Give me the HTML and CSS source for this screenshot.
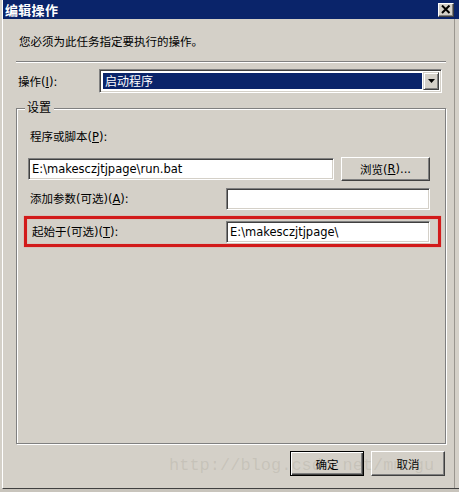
FILE: index.html
```html
<!DOCTYPE html>
<html lang="zh-CN">
<head>
<meta charset="utf-8">
<title>编辑操作</title>
<link rel="stylesheet" href="styles.css">
</head>
<body>
<div class="window">
  <div class="titlebar">
    <span class="title">编辑操作</span>
    <span class="close-btn">
      <svg width="10" height="9" viewBox="0 0 10 9"><path d="M1 0.5 L8.5 8 M8.5 0.5 L1 8" stroke="#000" stroke-width="2" fill="none"/></svg>
    </span>
  </div>
  <div class="content">
    <p class="intro">您必须为此任务指定要执行的操作。</p>
    <div class="sep"></div>
    <div class="op-row">
      <span class="op-label">操作(<u>I</u>):</span>
      <div class="combo">
        <div class="combo-value">启动程序</div>
        <div class="combo-btn">
          <svg width="7" height="4" viewBox="0 0 7 4"><path d="M0 0 H7 L3.5 4 Z" fill="#000"/></svg>
        </div>
      </div>
    </div>
    <div class="group">
      <div class="group-title">设置</div>
      <div class="field-label">程序或脚本(<u>P</u>):</div>
      <div class="row row-program">
        <div class="input input-program">E:\makesczjtjpage\run.bat</div>
        <div class="btn btn-browse">浏览(<u>R</u>)...</div>
      </div>
      <div class="row row-args">
        <span class="row-label">添加参数(可选)(<u>A</u>):</span>
        <div class="input input-short"></div>
      </div>
      <div class="highlight">
        <span class="row-label hl-label">起始于(可选)(<u>T</u>):</span>
        <div class="input input-short">E:\makesczjtjpage\</div>
      </div>
    </div>
    <div class="buttons">
      <div class="btn btn-default"><span>确定</span></div>
      <div class="btn btn-action">取消</div>
    </div>
  </div>
  <div class="watermark">http://blog.csdn.net/mmogu</div>
</div>
<div class="below"></div>
</body>
</html>
```
FILE: styles.css
```css
* { box-sizing: border-box; }
html, body {
  margin: 0;
  padding: 0;
  width: 459px;
  height: 492px;
  overflow: hidden;
  background: #d4d0c8;
  font-family: "DejaVu Sans", "Noto Sans CJK SC", sans-serif;
  font-size: 11.5px;
  color: #000;
}
u { text-decoration: underline; text-underline-offset: 1px; }

.window {
  position: relative;
  height: 489px;
  margin-left: 2px;
  border-left: 1px solid #ffffff;
  border-bottom: 1px solid #404040;
  box-shadow: inset -4px 0 0 #d4d0c8, inset -5px 0 0 #9a968f;
}

.titlebar {
  height: 19px;
  margin-top: 0;
  background: #0a246a;
  display: flex;
  align-items: center;
  justify-content: space-between;
  padding: 0 5px 0 2px;
}
.title {
  color: #fff;
  font-family: "Noto Sans CJK SC", sans-serif;
  font-weight: bold;
  font-size: 13px;
  line-height: 15px;
  letter-spacing: 0.3px;
}
.close-btn {
  width: 16px;
  height: 14px;
  background: #d4d0c8;
  border-top: 1px solid #fff;
  border-left: 1px solid #fff;
  border-right: 1px solid #404040;
  border-bottom: 1px solid #404040;
  box-shadow: inset -1px -1px 0 #808080;
  display: flex;
  align-items: center;
  justify-content: center;
  padding-bottom: 1px;
}

.content {
  padding: 0 13px 0 13px;
}
.intro {
  margin: 16px 0 0 0;
  padding-left: 3px;
  line-height: 14px;
}
.sep {
  margin-top: 12px;
  height: 2px;
  border-top: 1px solid #808080;
  border-bottom: 1px solid #fff;
}
.op-row {
  margin-top: 6px;
  display: flex;
  align-items: center;
  height: 24px;
}
.op-label {
  width: 83px;
  padding-left: 2px;
}
.combo {
  width: 343px;
  height: 24px;
  border-top: 1px solid #808080;
  border-left: 1px solid #808080;
  border-right: 1px solid #fff;
  border-bottom: 1px solid #fff;
  box-shadow: inset 1px 1px 0 #404040, inset -1px -1px 0 #d4d0c8;
  padding: 2px;
  display: flex;
  background: #fff;
}
.combo-value {
  flex: 1;
  background: #0a246a;
  color: #fff;
  margin: 1px 1px 1px 1px;
  padding-left: 2px;
  line-height: 16px;
  font-family: "Noto Sans CJK SC", sans-serif;
  font-size: 12px;
  outline: 1px dotted #f0c040;
  outline-offset: -1px;
  outline-color: transparent;
}
.combo-btn {
  width: 16px;
  background: #d4d0c8;
  border-top: 1px solid #d4d0c8;
  border-left: 1px solid #d4d0c8;
  border-right: 1px solid #404040;
  border-bottom: 1px solid #404040;
  box-shadow: inset 1px 1px 0 #fff, inset -1px -1px 0 #808080;
  display: flex;
  align-items: center;
  justify-content: center;
}

.group {
  margin-top: 15px;
  height: 336px;
  border: 1px solid #808080;
  box-shadow: inset 1px 1px 0 #fff, 1px 1px 0 #fff;
  padding: 0 0 0 11px;
}
.group-title {
  margin: -8px 0 0 -3px;
  width: fit-content;
  padding: 0 3px 0 2px;
  background: #d4d0c8;
  line-height: 14px;
  font-size: 12px;
}
.field-label {
  margin-top: 15px;
  padding-left: 2px;
  line-height: 14px;
}
.row {
  display: flex;
  align-items: center;
}
.row-program {
  margin-top: 13px;
  height: 24px;
}
.input {
  height: 22px;
  background: #fff;
  border-top: 1px solid #808080;
  border-left: 1px solid #808080;
  border-right: 1px solid #fff;
  border-bottom: 1px solid #fff;
  box-shadow: inset 1px 1px 0 #404040, inset -1px -1px 0 #d4d0c8;
  padding: 0 3px;
  line-height: 20px;
  font-size: 11.5px;
  white-space: nowrap;
}
.input-program {
  width: 306px;
}
.btn {
  height: 25px;
  background: #d4d0c8;
  border-top: 1px solid #fff;
  border-left: 1px solid #fff;
  border-right: 1px solid #404040;
  border-bottom: 1px solid #404040;
  box-shadow: inset -1px -1px 0 #808080;
  display: flex;
  align-items: center;
  justify-content: center;
  font-size: 11.5px;
}
.btn-browse {
  margin-left: 7px;
  width: 89px;
  height: 24px;
}
.row-args {
  margin-top: 7px;
  height: 22px;
}
.row-label {
  width: 198px;
  padding-left: 2px;
  line-height: 14px;
}
.input-short {
  width: 204px;
}
.highlight {
  margin: 6px 0 0 -4px;
  width: 417px;
  height: 31px;
  border: 3px solid #d21a1a;
  box-shadow: 0 0 1px #e87070, inset 0 0 1px #e87070;
  display: flex;
  align-items: center;
  padding: 0 8px 0 3px;
}
.hl-label {
  width: 196px;
}

.buttons {
  margin-top: 7px;
  display: flex;
  justify-content: flex-end;
  gap: 7px;
  padding-right: 1px;
}
.btn-default {
  width: 74px;
  border: 1px solid #000;
  box-shadow: inset 1px 1px 0 #fff, inset -1px -1px 0 #404040, inset -2px -2px 0 #808080;
}
.btn-action {
  width: 74px;
}

.watermark {
  position: absolute;
  left: 166px;
  top: 456px;
  font-family: "Liberation Mono", monospace;
  font-size: 17px;
  color: rgba(150, 145, 135, 0.22);
  pointer-events: none;
  letter-spacing: 0;
  white-space: nowrap;
}

.below {
  height: 3px;
  background: #c8c4bc;
}
```
